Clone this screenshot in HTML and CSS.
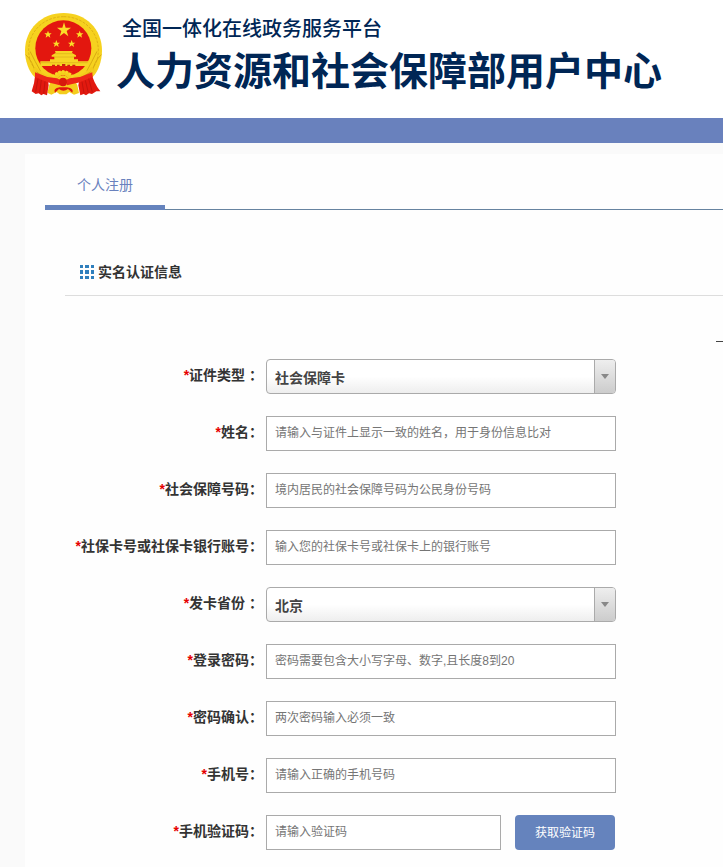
FILE: index.html
```html
<!DOCTYPE html>
<html lang="zh-CN">
<head>
<meta charset="utf-8">
<meta name="viewport" content="width=device-width, initial-scale=1">
<title>个人注册</title>
<link rel="stylesheet" href="styles.css">
</head>

<body>
<header class="header">
	<svg class="emblem" viewBox="15 12 234 255" aria-hidden="true">
		<!-- wreath -->
		<path d="M131 15C197 15 246 63 246 128C246 158 235 190 218 207L170 222H90L44 207C26 190 15 158 15 128C15 63 65 15 131 15Z" fill="#f6d21f"/>
		<path d="M131 26C190 26 235 70 235 127C235 158 222 182 200 200M131 26C72 26 26 70 26 127C26 158 39 182 62 200" fill="none" stroke="#dfb116" stroke-width="3" stroke-dasharray="8 4"/>
		<path d="M17 140Q38 158 48 200M30 130Q46 162 62 190M244 140Q223 158 214 200M231 130Q215 162 200 190" fill="none" stroke="#d9aa12" stroke-width="3"/>
		<ellipse cx="130" cy="121" rx="84" ry="84" fill="#e3170f"/>
		<!-- stars -->
		<g fill="#fbdd28">
			<path d="M132 43L137 59H153L140 69L145 85L132 75L119 85L124 69L111 59H127Z"/>
			<path d="M84 68L87 76H95L89 81L91 89L84 84L77 89L79 81L73 76H81Z"/>
			<path d="M179 68L182 76H190L184 81L186 89L179 84L172 89L174 81L168 76H176Z"/>
			<path d="M109 96L112 104H120L114 109L116 117L109 112L102 117L104 109L98 104H106Z"/>
			<path d="M155 96L158 104H166L160 109L162 117L155 112L148 117L150 109L144 104H152Z"/>
		</g>
		<!-- gate -->
		<path d="M105 129H158L156 135L168 142V146H162V154H174V160H204V174H61V160H90V154H103V146H95V142L107 135Z" fill="#f7d424"/>
		<path d="M106 137H158M102 147H163M62 164H203" stroke="#dcae18" stroke-width="2"/>
		<path d="M96 174V170H105V174ZM111 174V170H119V174ZM126 174V168H136V174ZM142 174V170H150V174ZM157 174V170H166V174Z" fill="#c9230f"/>
		<!-- wheat band -->
		<path d="M46 176Q68 204 108 208L102 225Q60 220 36 188ZM214 176Q192 204 154 208L160 225Q202 220 226 188Z" fill="#f3ca1b"/>
		<path d="M50 192Q72 211 104 215M212 192Q188 211 158 215" fill="none" stroke="#d19b10" stroke-width="3"/>
		<!-- gear -->
		<path d="M96 214Q104 189 129 188Q154 189 163 214L172 232L177 255L162 260L148 252L139 259H119L110 252L94 260L82 254L88 230Z" fill="#f4cd1c"/>
		<path d="M98 207Q129 174 160 207" fill="none" stroke="#f8d624" stroke-width="8" stroke-dasharray="7 4"/>
		<path d="M111 215Q129 187 147 215Z" fill="#dc1b0e"/>
		<path d="M114 214Q129 197 144 214" fill="none" stroke="#f4cd1c" stroke-width="7"/>
		<!-- ribbon -->
		<path d="M46 197L83 212L86 232L81 262L70 258L64 262L56 256L47 258L35 250Q44 225 46 197Z" fill="#e2190f"/>
		<path d="M216 197L179 212L175 232L181 262L191 258L198 262L207 256L216 258L229 250L241 250Q219 221 216 197Z" fill="#e2190f"/>
		<path d="M45 193L82 207L111 211L122 217L119 232L105 228L82 223L45 207ZM217 193L180 207L149 211L138 217L141 232L157 228L180 223L217 207Z" fill="#ed2618"/>
		<path d="M54 212L47 252M64 216L59 254M75 220L71 257M206 212L217 252M196 217L205 254M186 221L192 256" stroke="#c4140c" stroke-width="3"/>
		<path d="M119 238Q98 242 105 254L117 243Q130 254 144 243L157 254Q163 242 141 238Z" fill="#df1a0d"/>
		<circle cx="129" cy="223" r="12" fill="#d7190d"/>
	</svg>
	<div class="brand">
		<p class="platform">全国一体化在线政务服务平台</p>
		<h1 class="site-name">人力资源和社会保障部用户中心</h1>
	</div>
</header>
<div class="bar"></div>

<main class="panel">
	<nav class="tabs">
		<a href="#" class="tab on">个人注册</a>
	</nav>
	<section class="section">
		<h2 class="section-title">
			<svg class="grid-icon" viewBox="0 0 14 14" aria-hidden="true">
				<path d="M0 0h3v3H0zM5 0h4v3H5zM11 0h3v3h-3zM0 5h3v4H0zM5 5h4v4H5zM11 5h3v4h-3zM0 11h3v3H0zM5 11h4v3H5zM11 11h3v3h-3z" fill="#2f7fbd"/>
			</svg>
			实名认证信息
		</h2>
		<div class="divider"></div>
		<form class="form">
			<div class="row">
				<label for="idType"><i>*</i>证件类型 ：</label>
				<div class="select">
					<select id="idType"><option>社会保障卡</option></select>
				</div>
			</div>
			<div class="row">
				<label for="name"><i>*</i>姓名：</label>
				<input type="text" id="name" placeholder="请输入与证件上显示一致的姓名，用于身份信息比对">
			</div>
			<div class="row">
				<label for="idNo"><i>*</i>社会保障号码：</label>
				<input type="text" id="idNo" placeholder="境内居民的社会保障号码为公民身份号码">
			</div>
			<div class="row">
				<label for="cardNo"><i>*</i>社保卡号或社保卡银行账号：</label>
				<input type="text" id="cardNo" placeholder="输入您的社保卡号或社保卡上的银行账号">
			</div>
			<div class="row">
				<label for="province"><i>*</i>发卡省份 ：</label>
				<div class="select">
					<select id="province"><option>北京</option></select>
				</div>
			</div>
			<div class="row">
				<label for="pwd"><i>*</i>登录密码：</label>
				<input type="password" id="pwd" placeholder="密码需要包含大小写字母、数字,且长度8到20">
			</div>
			<div class="row">
				<label for="pwd2"><i>*</i>密码确认：</label>
				<input type="password" id="pwd2" placeholder="两次密码输入必须一致">
			</div>
			<div class="row">
				<label for="mobile"><i>*</i>手机号：</label>
				<input type="text" id="mobile" placeholder="请输入正确的手机号码">
			</div>
			<div class="row">
				<label for="code"><i>*</i>手机验证码：</label>
				<div class="code">
					<input type="text" id="code" placeholder="请输入验证码">
					<button type="button" class="btn">获取验证码</button>
				</div>
			</div>
		</form>
	</section>
</main>
</body>
</html>
```

FILE: styles.css
```css
*{margin:0; padding:0; box-sizing:border-box;}
body{background:#fafafa; color:#333; font:14px/20px "Liberation Sans","Noto Sans CJK SC",sans-serif;}
input,select,button{font-family:inherit;}

.header{display:flex; align-items:flex-start; gap:13px; height:118px; padding:12px 25px; background:#fff;}
.emblem{width:78px; height:85px; flex:none;}
.brand{color:#002655; white-space:nowrap; font-family:"Noto Sans CJK SC",sans-serif;}
.platform{padding-left:6px; font-size:20px; line-height:32px; font-weight:500;}
.site-name{font-size:39px; line-height:48px; font-weight:bold;}
.bar{height:25px; background:#6981bd;}

.panel{margin:11px 0 0 25px; padding:0 0 17px 20px; background:#fefefe;}
.tabs{display:flex; height:56px; border-bottom:1px solid #6683a0;}
.tab{width:120px; height:56px; border-bottom:5px solid #6583bd; color:#6981bd; line-height:62px; text-align:center; text-decoration:none;}

.section{padding:52px 0 0 20px;}
.section-title{display:flex; align-items:center; gap:4px; padding-left:15px; font-size:14px; line-height:20px;}
.grid-icon{width:14px; height:14px;}
.divider{height:46px; margin-top:13px; border-top:1px solid #ddd;}
/* short rule at the right edge, above the fields */
.form:before{content:""; display:block; width:7px; height:1px; margin:0 0 17px auto; background:#444;}

.row{display:grid; grid-template-columns:198px 350px; column-gap:3px; height:35px; margin-bottom:22px;}
.row:last-child{margin-bottom:0;}
.row label{font-weight:bold; line-height:33px; text-align:right; white-space:nowrap;}
.row i{color:#e60000; font-style:normal;}
.row input{width:100%; height:35px; padding:0 8px 2px; border:1px solid #aaa; background:#fff; font-size:12px; color:#333;}
.row input::placeholder{color:#757575;}

.select{position:relative;}
.select select{width:100%; height:35px; padding:2px 30px 0 8px; border:1px solid #aaa; border-radius:4px; background:linear-gradient(#fff 50%,#eee); color:#444; font-size:14px; font-weight:bold; appearance:none;}
.select:before{content:""; position:absolute; top:1px; right:1px; width:20px; height:33px; border-left:1px solid #aaa; border-radius:0 3px 3px 0; background:linear-gradient(#eee,#ccc); pointer-events:none;}
.select:after{content:""; position:absolute; top:15px; right:7px; border:4px solid transparent; border-top:5px solid #888; border-bottom:0; pointer-events:none;}

.code{display:flex; gap:14px; padding-right:1px;}
.code input{flex:1; min-width:0;}
.btn{width:100px; height:35px; padding-bottom:2px; border:0; border-radius:4px; background:#6583bd; color:#fff; font-size:12px;}
```
